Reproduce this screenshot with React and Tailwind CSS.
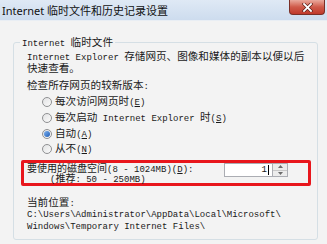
import React from "react";

const M = ({ children }) => (
  <span className="font-['Liberation_Mono'] text-[9px]">{children}</span>
);

function Radio({ checked }) {
  return (
    <span className="relative flex h-[10px] w-[10px] shrink-0 items-center justify-center rounded-full border border-[#8f9092] bg-gradient-to-br from-[#e2e3e4] to-[#fafafa]">
      {checked && (
        <span className="h-[6px] w-[6px] rounded-full bg-gradient-to-br from-[#7fb3f0] to-[#1c5bb5]" />
      )}
    </span>
  );
}

function RadioRow({ h, checked, children }) {
  return (
    <div className={`flex items-center gap-[3px] pl-[28px] ${h}`}>
      <Radio checked={checked} />
      <span className="leading-[12px] whitespace-nowrap">{children}</span>
    </div>
  );
}

export default function App() {
  return (
    <div className="flex h-[244px] w-[327px] flex-col overflow-hidden bg-[#f3f3f3] font-['Noto_Sans_CJK_SC',sans-serif] text-[10.6px] text-[#1a1a1a]">
      {/* title bar */}
      <div className="flex h-[21px] shrink-0 items-start justify-between border-b border-[#e9eef4] bg-gradient-to-b from-[#dfe9f5] to-[#cddcee]">
        <span className="pl-[2px] pt-[3px] text-[11px] leading-[14px] whitespace-nowrap text-[#111]">
          <span className="font-['Noto_Sans'] text-[11px]">Internet </span>
          临时文件和历史记录设置
        </span>
        <div className="mr-[2px] flex h-[15px] w-[36px] items-center justify-center rounded-b-[4px] border border-t-0 border-[#7a2f27] bg-gradient-to-b from-[#e9a99d] via-[#cf5a4a] to-[#c0392b]">
          <svg width="11" height="9" viewBox="0 0 11 9">
            <path d="M2 1 L9 8 M9 1 L2 8" stroke="#5a1e18" strokeWidth="3.2" strokeLinecap="square" />
            <path d="M2 1 L9 8 M9 1 L2 8" stroke="#ffffff" strokeWidth="1.8" strokeLinecap="square" />
          </svg>
        </div>
      </div>

      {/* group box */}
      <fieldset className="ml-[13px] mr-[9px] mt-[15px] min-w-0 rounded-[3px] border border-[#d5dfe5] pb-[6px]">
        <legend className="ml-[6px] h-[12px] px-[2px] leading-[12px] whitespace-nowrap">
          <M>Internet </M>临时文件
        </legend>

        <div className="mt-[2px] pl-[13px] leading-[12px]">
          <div className="h-[12px] whitespace-nowrap">
            <M>Internet Explorer </M>存储网页、图像和媒体的副本以便以后
          </div>
          <div className="h-[12px] whitespace-nowrap">快速查看。</div>
        </div>

        <div className="mt-[5px] h-[12px] pl-[13px] leading-[12px] whitespace-nowrap">
          检查所存网页的较新版本<M>:</M>
        </div>

        <div className="mt-[3px] flex flex-col">
          <RadioRow h="h-[16px]">
            每次访问网页时<M>(<u>E</u>)</M>
          </RadioRow>
          <RadioRow h="h-[16px]">
            每次启动<M> Internet Explorer </M>时<M>(<u>S</u>)</M>
          </RadioRow>
          <RadioRow h="h-[15px]" checked>
            自动<M>(<u>A</u>)</M>
          </RadioRow>
          <RadioRow h="h-[15px]">
            从不<M>(<u>N</u>)</M>
          </RadioRow>
        </div>

        {/* highlighted disk space row */}
        <div className="ml-[7px] mr-[6px] mt-[4px] flex h-[26px] items-start justify-between rounded-[2px] border-[3px] border-[#e8161c] pl-[3px] pr-[20px]">
          <div className="text-[10px] leading-[10px]">
            <div className="h-[10px] whitespace-nowrap">
              要使用的磁盘空间<M>(8 - 1024MB)(<u>D</u>):</M>
            </div>
            <div className="h-[10px] pl-[23px] whitespace-nowrap">
              <M>(</M>推荐<M>: 50 - 250MB)</M>
            </div>
          </div>
          <div className="flex h-[14px]">
            <div className="flex w-[49px] items-center justify-end border border-[#abadb3] bg-white pr-[3px]">
              <span className="font-['Liberation_Mono'] text-[9px] leading-[10px]">1</span>
              <span className="ml-[1px] h-[10px] w-[1px] bg-black" />
            </div>
            <div className="flex w-[15px] flex-col border border-l-0 border-[#abadb3] bg-[#ececec]">
              <div className="flex flex-1 items-center justify-center border-b border-[#c8c8c8]">
                <svg width="5" height="3" viewBox="0 0 5 3"><path d="M0 3 L2.5 0 L5 3 Z" fill="#6b6b6b" /></svg>
              </div>
              <div className="flex flex-1 items-center justify-center">
                <svg width="5" height="3" viewBox="0 0 5 3"><path d="M0 0 L2.5 3 L5 0 Z" fill="#6b6b6b" /></svg>
              </div>
            </div>
          </div>
        </div>

        <div className="mt-[10px] h-[12px] pl-[13px] leading-[12px] whitespace-nowrap">
          当前位置<M>:</M>
        </div>
        <div className="mt-[1px] pl-[13px] font-['Liberation_Mono'] text-[9px] leading-[12px] whitespace-nowrap">
          <div className="h-[12px]">C:\Users\Administrator\AppData\Local\Microsoft\</div>
          <div className="h-[12px]">Windows\Temporary Internet Files\</div>
        </div>
      </fieldset>
    </div>
  );
}
